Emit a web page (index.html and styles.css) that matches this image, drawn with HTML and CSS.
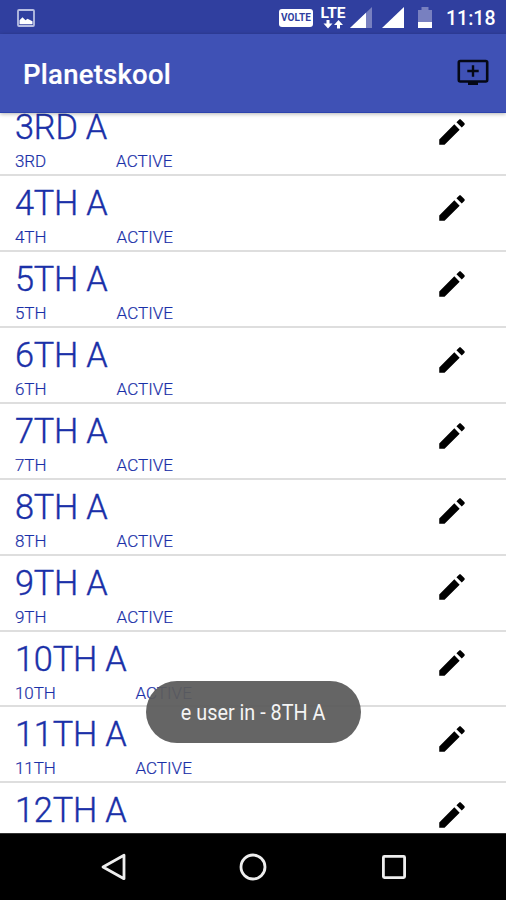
FILE: index.html
```html
<!DOCTYPE html>
<html lang="en">
<head>
<meta charset="utf-8">
<title>Planetskool</title>
<link rel="stylesheet" href="styles.css">
</head>
<body>
<svg class="defs" aria-hidden="true"><symbol id="pencil" viewBox="0 0 24 24"><path d="M3 17.25V21h3.75L17.400 10.350l-3.750-3.750L3 17.25zM20.71 7.04c.39-.39.39-1.02 0-1.41l-2.34-2.34c-.39-.39-1.02-.39-1.41 0l-1.83 1.83 3.75 3.75 1.83-1.83z"/></symbol></svg>
<div class="screen">
  <header class="status">
    <svg class="photo" width="18" height="18" viewBox="0 0 18 18"><rect x="1" y="1" width="16" height="16" rx="1" fill="none" stroke="#b9bfe2" stroke-width="1.8"/><path d="M2.500 15.200v-4l3-3 3 3 2-1.500 5 2.500v3z" fill="#fff"/></svg>
    <span class="volte">VOLTE</span>
    <span class="lte"><span class="lte-text">LTE</span><svg width="20" height="9" viewBox="0 0 20 9" fill="#fff"><path d="M3.500 0h3v3.500H9.500L5 8.500.5 3.500h3zM14 8.500h3V5h3L15.500 0 11 5h3z"/></svg></span>
    <svg class="signal-one" width="22" height="21" viewBox="0 0 22 21"><path d="M0 21 22 0V21z" fill="#7880c0"/><path d="M0 21 16 5.700V21z" fill="#fff"/></svg>
    <svg class="signal-two" width="22" height="21" viewBox="0 0 22 21"><path d="M0 21 22 0V21z" fill="#fff"/></svg>
    <svg class="battery" width="14" height="21" viewBox="0 0 14 21"><path d="M0 3h3.500V0h7v3H14v12H0z" fill="#7880c0"/><path d="M0 15h14v6H0z" fill="#fff"/></svg>
    <span class="clock">11:18</span>
  </header>
  <div class="appbar">
    <h1>Planetskool</h1>
    <svg width="32" height="27" viewBox="0 0 32 27"><rect x="1.800" y="2" width="28.400" height="20.500" rx="1.500" fill="none" stroke="#050814" stroke-width="2.600"/><path d="M11 22h10v4H11zM14.800 6.300h2.400v4.500h4.500v2.400h-4.500v4.500h-2.400v-4.500h-4.500v-2.400h4.500z" fill="#050814"/></svg>
  </div>
  <main class="viewport">
    <ul class="list">
      <li><div class="entry"><h2>3RD A</h2><span>3RD</span><span class="state">ACTIVE</span></div><svg class="edit"><use href="#pencil"/></svg></li>
      <li><div class="entry"><h2>4TH A</h2><span>4TH</span><span class="state">ACTIVE</span></div><svg class="edit"><use href="#pencil"/></svg></li>
      <li><div class="entry"><h2>5TH A</h2><span>5TH</span><span class="state">ACTIVE</span></div><svg class="edit"><use href="#pencil"/></svg></li>
      <li><div class="entry"><h2>6TH A</h2><span>6TH</span><span class="state">ACTIVE</span></div><svg class="edit"><use href="#pencil"/></svg></li>
      <li><div class="entry"><h2>7TH A</h2><span>7TH</span><span class="state">ACTIVE</span></div><svg class="edit"><use href="#pencil"/></svg></li>
      <li><div class="entry"><h2>8TH A</h2><span>8TH</span><span class="state">ACTIVE</span></div><svg class="edit"><use href="#pencil"/></svg></li>
      <li><div class="entry"><h2>9TH A</h2><span>9TH</span><span class="state">ACTIVE</span></div><svg class="edit"><use href="#pencil"/></svg></li>
      <li><div class="entry"><h2>10TH A</h2><span>10TH</span><span class="state">ACTIVE</span></div><svg class="edit"><use href="#pencil"/></svg></li>
      <li><div class="entry"><h2>11TH A</h2><span>11TH</span><span class="state">ACTIVE</span></div><svg class="edit"><use href="#pencil"/></svg></li>
      <li><div class="entry"><h2>12TH A</h2></div><svg class="edit"><use href="#pencil"/></svg></li>
    </ul>
  </main>
  <nav class="navbar">
    <svg width="28" height="28" viewBox="0 0 28 28"><path d="M25 2.300v23.400L4 14z"/></svg>
    <svg width="28" height="28" viewBox="0 0 28 28"><circle cx="14" cy="14" r="12"/></svg>
    <svg width="28" height="28" viewBox="0 0 28 28"><rect x="3.400" y="3.400" width="21.200" height="21.200" rx="1"/></svg>
  </nav>
  <div class="toast"><span>e user in - 8TH A</span></div>
</div>
</body>
</html>
```

FILE: styles.css
```css
* { box-sizing: border-box; margin: 0; padding: 0; }
body { font-family: Roboto, "Liberation Sans", sans-serif; background: #fff; }
svg { display: block; flex: none; }
.defs { position: absolute; width: 0; height: 0; }
.screen { position: relative; width: 506px; height: 900px; display: flex; flex-direction: column; overflow: hidden; }
.status { height: 34px; flex: none; background: #303f9f; color: #fff; display: flex; align-items: flex-start; padding-left: 17px; }
.photo { margin-top: 9px; }
.volte { margin: 9px 0 0 244px; width: 34px; height: 18px; border-radius: 3px; background: #fff; color: #303f9f; font-size: 10px; font-weight: 700; line-height: 18px; text-align: center; letter-spacing: .1px; }
.lte { margin: 6px 0 0 6px; width: 28px; display: flex; flex-direction: column; align-items: center; }
.lte-text { font-size: 15.500px; line-height: 14px; font-weight: 700; }
.signal-one { margin: 7px 0 0 3px; }
.signal-two { margin: 7px 0 0 10px; }
.battery { margin: 7px 0 0 14px; }
.clock { margin: 7px 0 0 14px; font-size: 19.500px; line-height: 23px; font-weight: 500; }
.appbar { position: relative; z-index: 1; height: 79px; flex: none; background: #3f51b5; border-bottom: 1px solid #2c43ae; box-shadow: 0 1px 4px rgba(0,0,0,.3); display: flex; align-items: center; justify-content: space-between; padding: 4px 17px 0 23px; color: #fff; }
h1 { font-size: 27.500px; line-height: 32px; font-weight: 500; letter-spacing: .25px; -webkit-text-stroke: .2px currentColor; }
.appbar svg { margin-top: -5px; }
.viewport { flex: 1; min-height: 0; overflow: hidden; background: #fff; }
.list { list-style: none; margin-top: -12.700px; }
.list li { height: 75.900px; border-bottom: 2px solid #dedede; display: flex; justify-content: space-between; padding: 7px 37px 0 15px; color: #1a30a8; }
.entry { display: grid; grid-template-columns: auto auto; align-content: start; row-gap: 3px; font-size: 17px; line-height: 20px; font-weight: 300; letter-spacing: -.1px; -webkit-text-stroke: .2px currentColor; }
h2 { grid-row: 1; grid-column: 1; font-size: 34.300px; line-height: 41px; font-weight: 300; letter-spacing: -.2px; -webkit-text-stroke: .4px currentColor; }
.entry span { grid-row: 2; }
.entry .state { padding-left: 9px; letter-spacing: .05px; }
.edit { width: 34px; height: 34px; margin-top: 7.700px; fill: #000; }
.navbar { height: 67px; flex: none; background: #000; border-top: 1px solid #333; display: flex; justify-content: center; align-items: center; gap: 112.500px; }
.navbar svg { fill: none; stroke: #eee; stroke-width: 2.800; stroke-linejoin: round; }
.toast { position: absolute; left: 146px; top: 681px; width: 215px; height: 62px; border-radius: 31px; background: rgba(91,91,91,.94); color: #f4f4f4; display: flex; align-items: center; justify-content: center; font-size: 22.500px; white-space: nowrap; }
.toast span { transform: scaleX(.88); }
```
